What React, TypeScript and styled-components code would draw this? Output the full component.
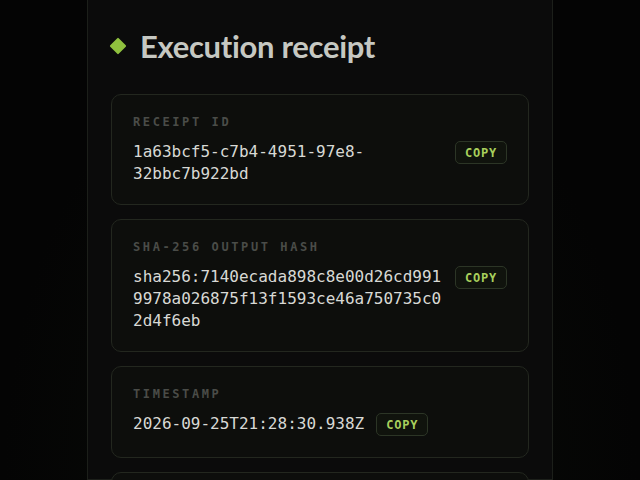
import styled, { createGlobalStyle } from 'styled-components';

const GlobalStyle = createGlobalStyle`
  html, body {
    margin: 0;
    padding: 0;
    background: #040404;
    height: 100%;
    overflow: hidden;
  }
  #root {
    min-height: 100%;
  }
`;

interface IField {
  label: string;
  value: string;
}

const fields: IField[] = [
  { label: 'Receipt ID', value: '1a63bcf5-c7b4-4951-97e8-32bbc7b922bd' },
  { label: 'SHA-256 output hash', value: 'sha256:7140ecada898c8e00d26cd9919978a026875f13f1593ce46a750735c02d4f6eb' },
  { label: 'Timestamp', value: '2026-09-25T21:28:30.938Z' },
  { label: '', value: '' },
];

function FieldCard({ label, value }: IField): JSX.Element {
  return (
    <Card>
      {label && <Label>{label}</Label>}
      {value && (
        <ValueRow>
          <Value>{value}</Value>
          <CopyButton type="button">Copy</CopyButton>
        </ValueRow>
      )}
    </Card>
  );
}

export default function App(): JSX.Element {
  return (
    <>
      <GlobalStyle />
      <Page>
        <Panel>
          <Heading>
            <Diamond />
            <h2>Execution receipt</h2>
          </Heading>
          <CardList>
            {fields.map((f, i) => (
              <FieldCard key={i} label={f.label} value={f.value} />
            ))}
          </CardList>
        </Panel>
      </Page>
    </>
  );
}

const Page = styled.div`
  width: 640px;
  height: 480px;
  display: flex;
  justify-content: center;
  background: radial-gradient(ellipse at 50% 100%, #0a0d08 0%, #040404 70%);
`;

const Panel = styled.section`
  width: 466px;
  box-sizing: border-box;
  background: #0b0b0b;
  border: 1px solid #1c1f1a;
  border-top: none;
  padding: 27px 23px 0;
  display: flex;
  flex-direction: column;
`;

const Heading = styled.div`
  display: flex;
  align-items: center;
  gap: 16px;
  margin-left: 1px;
  margin-bottom: 29px;

  h2 {
    margin: 0;
    font-family: Lato, "Noto Sans", sans-serif;
    font-weight: 700;
    font-size: 31px;
    line-height: 38px;
    color: #c6c8c2;
    letter-spacing: -0.3px;
  }
`;

const Diamond = styled.span`
  flex: none;
  width: 12px;
  height: 12px;
  background: #8fc03e;
  transform: rotate(45deg);
  border-radius: 1px;
`;

const CardList = styled.div`
  display: flex;
  flex-direction: column;
  gap: 14px;
`;

const Card = styled.div`
  box-sizing: border-box;
  border: 1px solid #23271f;
  border-radius: 10px;
  background: #0d0e0c;
  padding: 19px 21px 19px;
  min-height: 92px;
`;

const Label = styled.div`
  font-family: "DejaVu Sans Mono", monospace;
  font-weight: 700;
  font-size: 12px;
  line-height: 16px;
  letter-spacing: 2.6px;
  text-transform: uppercase;
  color: #4a4c48;
  margin-bottom: 11px;
`;

const ValueRow = styled.div`
  display: flex;
  align-items: flex-start;
  gap: 12px;
`;

const Value = styled.div`
  flex: 0 1 auto;
  min-width: 0;
  font-family: "DejaVu Sans Mono", monospace;
  font-size: 16px;
  line-height: 22px;
  color: #d8d9d5;
  overflow-wrap: anywhere;
`;

const CopyButton = styled.button`
  flex: none;
  width: 52px;
  height: 23px;
  padding: 0;
  box-sizing: border-box;
  border: 1px solid #2c3526;
  border-radius: 5px;
  background: #10130d;
  color: #a8cf5c;
  font-family: "DejaVu Sans Mono", monospace;
  font-weight: 700;
  font-size: 12px;
  letter-spacing: 0.8px;
  text-transform: uppercase;
  cursor: pointer;
`;
